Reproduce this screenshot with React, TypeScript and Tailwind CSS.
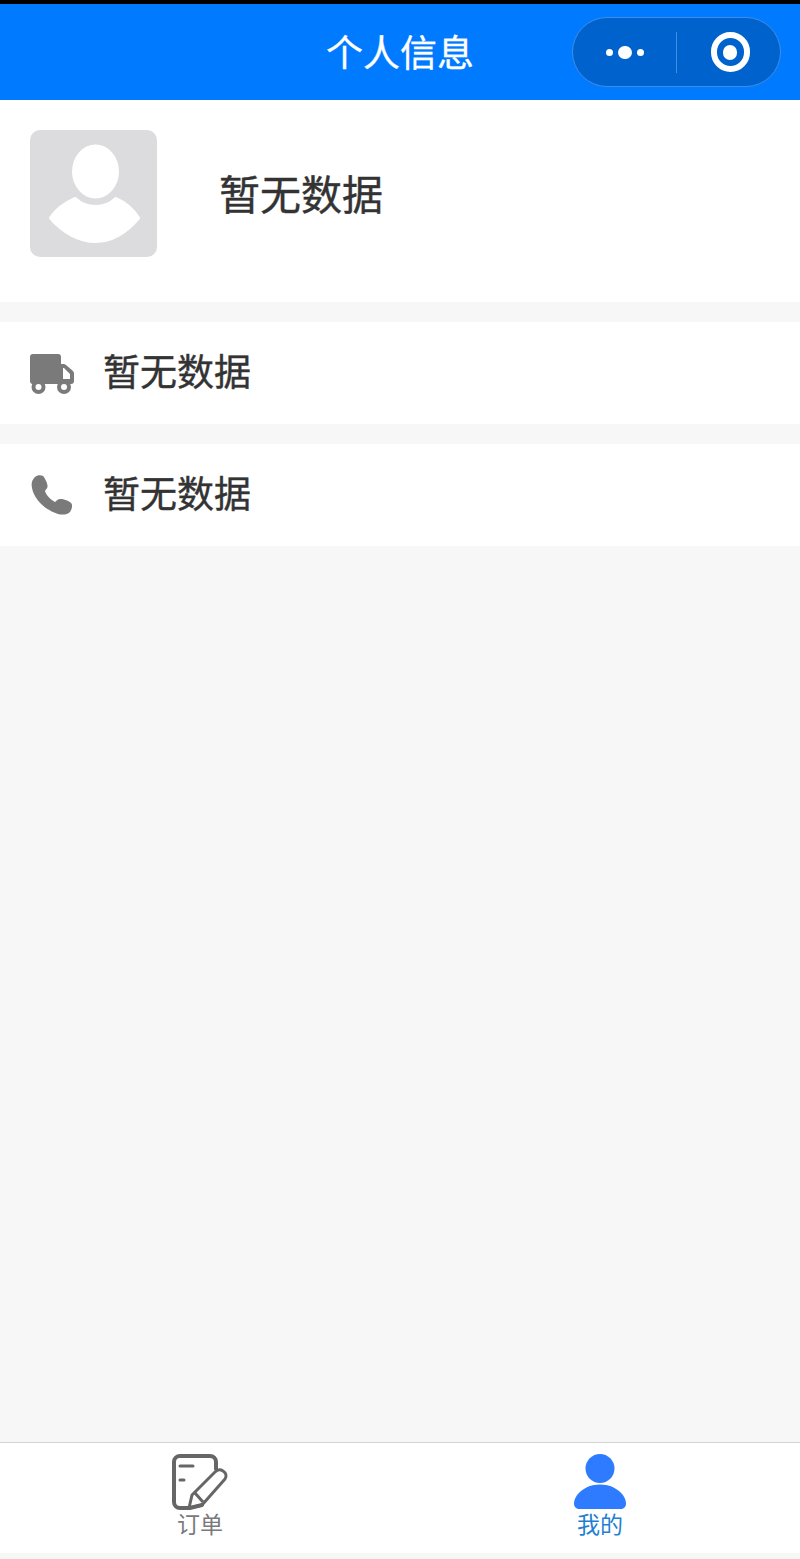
const cjk = "font-['Noto_Sans_CJK_SC','Noto_Sans',sans-serif]";

function TruckIcon() {
  return (
    <svg width="44" height="40" viewBox="0 0 44 40" className="mt-[2px] shrink-0">
      <path fill="#7a7a7a" fillRule="evenodd" d="M3 0h25a3 3 0 0 1 3 3v7h2.500c1 0 1.800.4 2.500 1l7 6c.7.700 1 1.500 1 2.500V27a3 3 0 0 1-3 3H3a3 3 0 0 1-3-3V3a3 3 0 0 1 3-3zM33 14v11h7v-5l-6-6z" />
      <circle cx="8.500" cy="33" r="7" fill="#7a7a7a" />
      <circle cx="8.500" cy="33" r="3" fill="#fff" />
      <circle cx="34" cy="33" r="7" fill="#7a7a7a" />
      <circle cx="34" cy="33" r="3" fill="#fff" />
    </svg>
  );
}

function PhoneIcon() {
  return (
    <svg width="42" height="40" viewBox="0 0 42 40" className="ml-px shrink-0">
      <path fill="#7a7a7a" d="M4 2C6 0 10 0 12 1c2 2 5 8 4.500 11-.5 2-2.500 3-2.500 4 1 4 6 9 10 11 1 0 2-3 5-3 4 0 9 2 11 4 2 2 1 6-1 9-3 3-8 3-12 2C14 35 3 24 1 13 0 8 1 5 4 2z" />
    </svg>
  );
}

function Capsule() {
  return (
    <div className="absolute left-[572px] top-[13px] flex h-[70px] w-[209px] items-center rounded-[35px] border border-[#3f8ee6] bg-[#0062cc]">
      <div className="flex w-[103px] items-center justify-center gap-[5px]">
        <span className="h-[7px] w-[7px] rounded-full bg-white" />
        <span className="h-[13px] w-[14px] rounded-full bg-white" />
        <span className="h-[7px] w-[7px] rounded-full bg-white" />
      </div>
      <div className="h-[41px] w-px bg-[#3f8ee6]" />
      <div className="flex flex-1 items-center justify-center pl-[3px]">
        <div className="flex h-[40px] w-[39px] items-center justify-center rounded-full border-[6px] border-white">
          <span className="h-[15px] w-[14px] rounded-full bg-white" />
        </div>
      </div>
    </div>
  );
}

function InfoRow({ icon }: { icon: React.ReactNode }) {
  return (
    <div className="flex h-[102px] items-center bg-white pl-[30px]">
      <div className="flex w-[73px] items-center">{icon}</div>
      <span className="mb-[6px] text-[37px] leading-none whitespace-nowrap text-[#333] [-webkit-text-stroke:0.4px_#333]">暂无数据</span>
    </div>
  );
}

export default function App() {
  return (
    <div className={`flex h-[1559px] w-[800px] flex-col bg-[#f7f7f7] ${cjk}`}>
      <div className="h-[4px] bg-black" />
      <header className="relative flex h-[96px] items-center justify-center bg-[#007aff]">
        <h1 className="mb-[2px] text-[37px] leading-none font-normal text-white [-webkit-text-stroke:0.3px_#fff]">个人信息</h1>
        <Capsule />
      </header>

      <section className="flex h-[202px] bg-white pt-[30px] pl-[30px]">
        <div className="h-[127px] w-[127px] rounded-[10px] bg-[#dcdcde]">
          <svg width="127" height="127" viewBox="0 0 127 127">
            <ellipse cx="65.500" cy="41.500" rx="23.500" ry="27" fill="#fff" />
            <path fill="#fff" stroke="#fff" strokeWidth="4" strokeLinejoin="round" d="M45 69c6 6 13 8 20.500 8S80 75 86 69c9 4 17 11 22 19-11 13-26 23-42.500 23S32 101 21 88c5-8 15-15 24-19z" />
          </svg>
        </div>
        <span className="mt-[38px] ml-[62px] text-[41px] leading-[48px] whitespace-nowrap text-[#333] [-webkit-text-stroke:0.4px_#333]">暂无数据</span>
      </section>

      <div className="mt-[20px]">
        <InfoRow icon={<TruckIcon />} />
      </div>
      <div className="mt-[20px]">
        <InfoRow icon={<PhoneIcon />} />
      </div>

      <div className="flex-1" />

      <nav className="mb-[6px] flex h-[111px] border-t border-[#d4d4d4] bg-white">
        <div className="flex flex-1 flex-col items-center pt-[11px]">
          <svg width="58" height="56" viewBox="0 0 58 56" className="ml-[1px]">
            <path fill="none" stroke="#666" strokeWidth="4" strokeLinecap="round" d="M44 15V8a6 6 0 0 0-6-6H8a6 6 0 0 0-6 6v40a6 6 0 0 0 6 6h10l12-3" />
            <path fill="none" stroke="#666" strokeWidth="3" strokeLinecap="round" d="M8 12h13M8 26h4" />
            <path fill="none" stroke="#666" strokeWidth="3" strokeLinejoin="round" d="M17 54l3-13L43 18c2-2 5-3 8-1s4 5 2 8L30 51z" />
            <path fill="none" stroke="#666" strokeWidth="3" d="M23 39l8 9" />
          </svg>
          <span className="mt-[-1px] text-[23px] leading-[28px] text-[#7a7a7a]">订单</span>
        </div>
        <div className="flex flex-1 flex-col items-center pt-[11px]">
          <svg width="54" height="56" viewBox="0 0 54 56">
            <circle cx="27" cy="14.500" r="14.500" fill="#2f7bff" />
            <path fill="#2f7bff" d="M27 30.500c16 0 26 11 26 19 0 3-2 5.500-5 5.500H6c-3 0-5-2.500-5-5.500 0-8 10-19 26-19z" />
          </svg>
          <span className="mt-[-1px] text-[23px] leading-[28px] text-[#1f7fd1]">我的</span>
        </div>
      </nav>
    </div>
  );
}
